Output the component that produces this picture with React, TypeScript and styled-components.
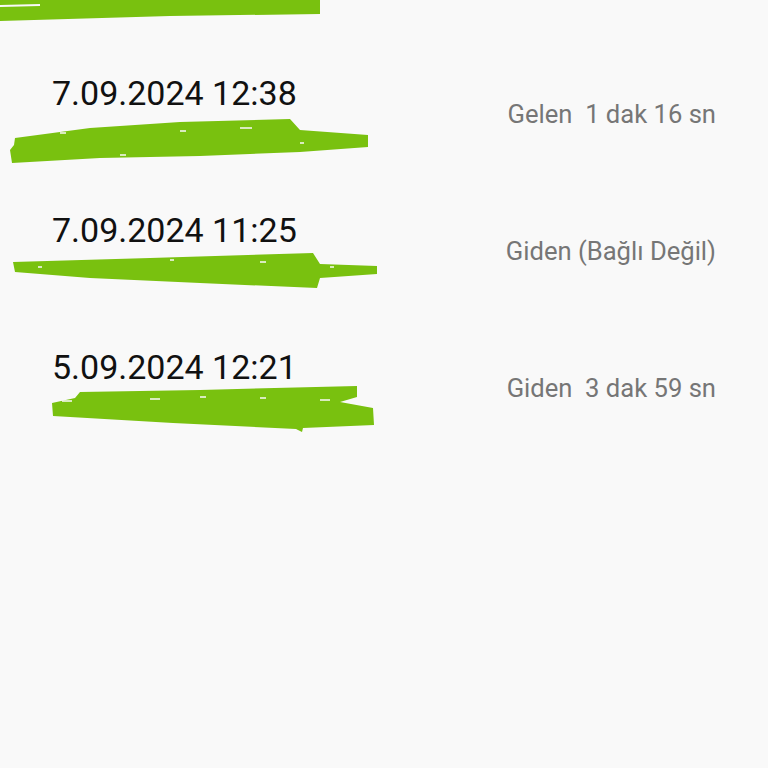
import * as React from "react";
import styled, { createGlobalStyle } from "styled-components";

const GlobalStyle = createGlobalStyle`
  html, body {
    margin: 0;
    padding: 0;
    background: #f9f9f9;
  }
  body {
    font-family: Roboto, "Noto Sans", sans-serif;
  }
`;

const Page = styled.div`
  width: 768px;
  height: 768px;
  overflow: hidden;
  background: #f9f9f9;
  display: flex;
  flex-direction: column;
`;

const Smear = styled.svg`
  display: block;
  flex-shrink: 0;
  overflow: visible;
`;

const Row = styled.div`
  height: 137px;
  flex-shrink: 0;
  display: flex;
  justify-content: space-between;
  align-items: flex-start;
  padding: 51px 52px 0 52px;
  box-sizing: border-box;
`;

const Left = styled.div`
  display: flex;
  flex-direction: column;
`;

const DateText = styled.div`
  font-size: 34px;
  line-height: 40px;
  color: #111;
`;

const Status = styled.div`
  margin-top: 26px;
  font-size: 25.6px;
  line-height: 30px;
  color: #767676;
  white-space: pre;
`;

const GREEN = "#79c10f";
const BG = "#f9f9f9";

type Call = { date: string; status: string; smear: string; specks: string };

const calls: Call[] = [
  {
    date: "7.09.2024 12:38",
    status: "Gelen  1 dak 16 sn",
    smear:
      "M15,25 L90,15 L180,9 L290,6 L300,17 L368,22 L368,34 L300,39 L200,43 L100,45 L12,50 L10,37 L14,32 Z",
    specks: "M60,20 L66,20 M180,18 L186,18 M240,15 L252,15 M120,42 L126,42 M300,30 L304,30",
  },
  {
    date: "7.09.2024 11:25",
    status: "Giden (Bağlı Değil)",
    smear:
      "M13,12 L150,8 L313,3 L320,14 L377,16 L377,24 L320,28 L317,38 L200,33 L90,28 L15,22 Z",
    specks: "M38,17 L42,17 M170,10 L174,10 M260,12 L266,12 M330,17 L334,17",
  },
  {
    date: "5.09.2024 12:21",
    status: "Giden  3 dak 59 sn",
    smear:
      "M52,16 L75,11 L80,5 L200,3 L357,-1 L357,10 L340,15 L373,21 L374,38 L303,41 L302,45 L296,42 L173,36 L53,29 Z",
    specks: "M62,14 L72,14 M150,12 L160,12 M200,10 L206,10 M260,11 L266,11 M320,13 L330,13",
  },
];

export default function App() {
  return (
    <>
      <GlobalStyle />
      <Page>
        <Smear width={768} height={22} viewBox="0 0 768 22">
          <path d="M0,0 L320,0 L320,14 L170,16 L0,21 Z" fill={GREEN} />
          <path d="M0,6 L40,5" stroke={BG} strokeWidth={2} />
        </Smear>
        {calls.map((c) => (
          <Row key={c.date}>
            <Left>
              <DateText>{c.date}</DateText>
              <Smear
                width={380}
                height={46}
                viewBox="0 0 380 46"
                style={{ marginLeft: -52 }}
              >
                <path d={c.smear} fill={GREEN} />
                <path d={c.specks} stroke={BG} strokeWidth={1.5} />
              </Smear>
            </Left>
            <Status>{c.status}</Status>
          </Row>
        ))}
      </Page>
    </>
  );
}
